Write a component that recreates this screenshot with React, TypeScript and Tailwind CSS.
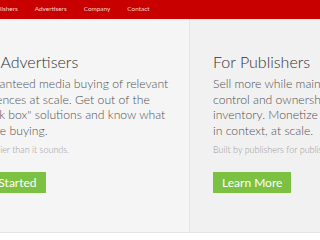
import React from 'react';

const navItems = ['Publishers', 'Advertisers', 'Company', 'Contact'];

const panels = [
  {
    title: 'For Advertisers',
    lines: [
      'Guaranteed media buying of relevant',
      'audiences at scale. Get out of the',
      '"black box" solutions and know what',
      "you're buying.",
    ],
    note: "It's easier than it sounds.",
    cta: 'Get Started',
    bg: 'bg-[#f5f5f5]',
    btn: 'ml-[-7px]',
  },
  {
    title: 'For Publishers',
    lines: [
      'Sell more while maintaining',
      'control and ownership of your',
      'inventory. Monetize your audience',
      'in context, at scale.',
    ],
    note: 'Built by publishers for publishers.',
    cta: 'Learn More',
    bg: 'bg-[#f1f1f1]',
    btn: '',
  },
];

export default function App() {
  return (
    <main className="w-[320px] h-[240px] overflow-hidden bg-white font-['Lato','Liberation_Sans',sans-serif]">
      <nav className="h-[19px] bg-[#c80000] flex items-center gap-[17px] ml-[-11px]">
        {navItems.map(item => (
          <a key={item} className="text-[6.4px] text-[#f6d6d6] whitespace-nowrap leading-none">
            {item}
          </a>
        ))}
      </nav>

      <div className="flex ml-[-49px] border-b border-[#e4e4e4]">
        {panels.map((panel, i) => (
          <section
            key={panel.title}
            className={`w-[239px] shrink-0 ${panel.bg} ${i === 0 ? 'border-r border-[#e6e6e6]' : ''} pl-[23px] pr-[16px] pt-[33px] pb-[39px]`}
          >
            <h2 className="text-[16px] leading-[20px] font-light text-[#333333] whitespace-nowrap">{panel.title}</h2>
            <p className="mt-[4px] text-[12.2px] leading-[15.5px] font-light text-[#505050] whitespace-nowrap">
              {panel.lines.map(line => (
                <span key={line} className="block">{line}</span>
              ))}
            </p>
            <p className="mt-[6px] text-[9px] leading-[12px] font-light text-[#999999] whitespace-nowrap">{panel.note}</p>
            <button className={`mt-[16px] ${panel.btn} h-[21px] px-[9px] bg-[#7cc142] text-white text-[12px] leading-none whitespace-nowrap`}>
              {panel.cta}
            </button>
          </section>
        ))}
      </div>
    </main>
  );
}
